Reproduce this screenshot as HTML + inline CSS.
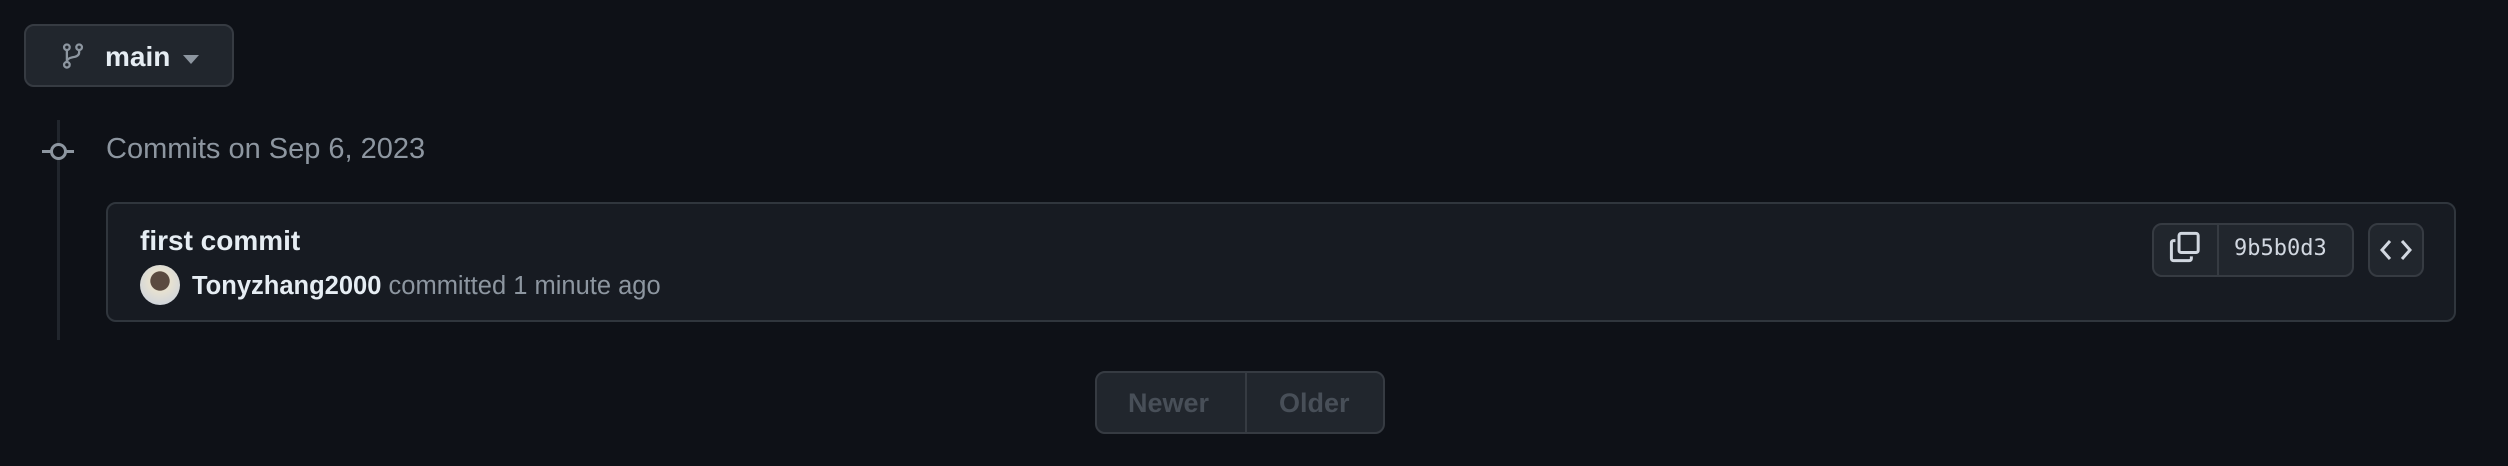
<!DOCTYPE html>
<html><head><style>
*{box-sizing:border-box;margin:0;padding:0}
body{width:2508px;height:466px;background:#0e1117;font-family:"Liberation Sans",sans-serif;position:relative;overflow:hidden;color:#e6edf3}
.abs{position:absolute}
.btn{background:#21262d;border:2px solid #363b42;border-radius:10px}
</style></head><body>
<div class="abs btn" style="left:24px;top:24px;width:210px;height:63px"></div>
<svg class="abs" style="left:58px;top:42px" width="30" height="28" viewBox="0 0 16 16" fill="none" stroke="#8d96a0" stroke-width="1.3"><circle cx="4.5" cy="3" r="1.6"/><circle cx="4.5" cy="13" r="1.6"/><circle cx="11.5" cy="3" r="1.6"/><path d="M4.5 4.6v6.8M11.5 4.6v1.4c0 2-2 2.5-4 2.8-1.5.3-3 .8-3 2.6"/></svg>
<div class="abs" style="left:105px;top:41px;font-size:28px;font-weight:bold;color:#e6edf3">main</div>
<svg class="abs" style="left:183px;top:55px" width="16" height="10"><path d="M0 0h16L8 9z" fill="#8d96a0"/></svg>

<div class="abs" style="left:57px;top:120px;width:3px;height:220px;background:#21262d"></div>
<div class="abs" style="left:42px;top:150px;width:32px;height:3px;background:#8d96a0"></div>
<div class="abs" style="left:50px;top:143px;width:17px;height:17px;border:3px solid #8d96a0;border-radius:50%;background:#0e1117"></div>
<div class="abs" style="left:106px;top:133px;font-size:29px;color:#8d96a0">Commits on Sep 6, 2023</div>

<div class="abs" style="left:106px;top:202px;width:2350px;height:120px;background:#171b22;border:2px solid #30363d;border-radius:10px"></div>
<div class="abs" style="left:140px;top:225px;font-size:28px;font-weight:bold;color:#e6edf3">first commit</div>
<div class="abs" style="left:140px;top:265px;width:40px;height:40px;border-radius:50%;background:radial-gradient(circle at 50% 40%,#5a4a40 0 30%,#e8e2d0 32%,#cfd4dc 80%)"></div>
<div class="abs" style="left:192px;top:272px;font-size:25.5px;white-space:nowrap"><b style="color:#e6edf3">Tonyzhang2000</b> <span style="color:#8d96a0">committed 1 minute ago</span></div>

<div class="abs btn" style="left:2152px;top:223px;width:202px;height:54px"></div>
<div class="abs" style="left:2217px;top:224px;width:2px;height:52px;background:#363b42"></div>
<svg class="abs" style="left:2168px;top:230px" width="34" height="34" viewBox="0 0 16 16" fill="none" stroke="#d1d7e0" stroke-width="1.4"><path d="M3.5 5H2.6c-.6 0-1 .4-1 1v7.4c0 .6.4 1 1 1H10c.6 0 1-.4 1-1v-1"/><rect x="5.2" y="1.6" width="9" height="9" rx="1"/></svg>
<div class="abs" style="left:2234px;top:236px;font-family:'DejaVu Sans Mono',monospace;font-size:22px;color:#d1d7e0">9b5b0d3</div>
<div class="abs btn" style="left:2368px;top:223px;width:56px;height:54px"></div>
<svg class="abs" style="left:2380px;top:237px" width="32" height="26" viewBox="0 0 16 13" fill="none" stroke="#d1d7e0" stroke-width="1.5"><path d="M5 2 1 6.5 5 11M11 2l4 4.5-4 4.5"/></svg>

<div class="abs btn" style="left:1095px;top:371px;width:290px;height:63px;border-radius:10px"></div>
<div class="abs" style="left:1245px;top:372px;width:2px;height:61px;background:#363b42"></div>
<div class="abs" style="left:1128px;top:388px;font-size:27px;font-weight:bold;color:#484f58">Newer</div>
<div class="abs" style="left:1279px;top:388px;font-size:27px;font-weight:bold;color:#484f58">Older</div>
</body></html>
